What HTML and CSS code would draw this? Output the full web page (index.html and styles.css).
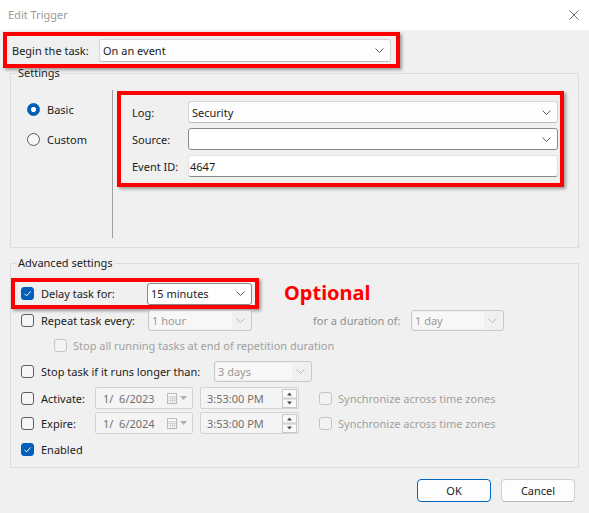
FILE: index.html
```html
<!DOCTYPE html>
<html>
<head>
<meta charset="utf-8">
<title>Edit Trigger</title>
<link rel="stylesheet" href="styles.css">
</head>
<body>
<div class="window">
  <div class="titlebar">
    <span class="title">Edit Trigger</span>
    <svg class="close" width="10" height="10" viewBox="0 0 10 10"><path d="M0.5 0.5L9.5 9.5M9.5 0.5L0.5 9.5" stroke="#707070" stroke-width="1" fill="none"/></svg>
  </div>

  <div class="mark begin-row">
    <span class="begin-label">Begin the task:</span>
    <div class="select begin-select">
      <span class="val">On an event</span>
      <svg class="chev" width="9" height="5" viewBox="0 0 9 5"><path d="M0.5 0.5L4.5 4.5L8.5 0.5" fill="none" stroke="#5f5f5f"/></svg>
    </div>
  </div>

  <fieldset class="group settings">
    <legend>Settings</legend>
    <div class="settings-inner">
      <div class="radios">
        <div class="radio-row"><span class="radio on"></span><span>Basic</span></div>
        <div class="radio-row"><span class="radio"></span><span>Custom</span></div>
      </div>
      <div class="vsep"></div>
      <div class="mark event-box">
        <div class="field-row">
          <span class="field-label">Log:</span>
          <div class="select field">
            <span class="val">Security</span>
            <svg class="chev" width="9" height="5" viewBox="0 0 9 5"><path d="M0.5 0.5L4.5 4.5L8.5 0.5" fill="none" stroke="#5f5f5f"/></svg>
          </div>
        </div>
        <div class="field-row">
          <span class="field-label">Source:</span>
          <div class="select field dark">
            <span class="val"></span>
            <svg class="chev" width="9" height="5" viewBox="0 0 9 5"><path d="M0.5 0.5L4.5 4.5L8.5 0.5" fill="none" stroke="#5f5f5f"/></svg>
          </div>
        </div>
        <div class="field-row">
          <span class="field-label">Event ID:</span>
          <div class="input field"><span class="val">4647</span></div>
        </div>
      </div>
    </div>
  </fieldset>

  <fieldset class="group advanced">
    <legend>Advanced settings</legend>
    <div class="adv-top">
      <div class="mark delay-box">
        <span class="cb on"><svg width="11" height="11" viewBox="0 0 11 11"><path d="M2.5 5.8L4.6 7.9L8.6 3.4" fill="none" stroke="#fff" stroke-width="1"/></svg></span>
        <span class="lbl w-delay">Delay task for:</span>
        <div class="select dark delay-select">
          <span class="val">15 minutes</span>
          <svg class="chev" width="9" height="5" viewBox="0 0 9 5"><path d="M0.5 0.5L4.5 4.5L8.5 0.5" fill="none" stroke="#5f5f5f"/></svg>
        </div>
      </div>
      <span class="optional">Optional</span>
    </div>

    <div class="row r-repeat">
      <span class="cb"></span>
      <span class="lbl w-repeat">Repeat task every:</span>
      <div class="dsel s-hour">
        <span class="dval">1 hour</span>
        <svg class="dchev" width="9" height="5" viewBox="0 0 9 5"><path d="M0.5 0.5L4.5 4.5L8.5 0.5" fill="none" stroke="#b8b8b8"/></svg>
      </div>
      <span class="dis-text duration-label">for a duration of:</span>
      <div class="dsel s-day">
        <span class="dval">1 day</span>
        <svg class="dchev" width="9" height="5" viewBox="0 0 9 5"><path d="M0.5 0.5L4.5 4.5L8.5 0.5" fill="none" stroke="#b8b8b8"/></svg>
      </div>
    </div>

    <div class="row r-stopall">
      <span class="cb dis"></span>
      <span class="dis-text lbl-dis">Stop all running tasks at end of repetition duration</span>
    </div>

    <div class="row r-stoptask">
      <span class="cb"></span>
      <span class="lbl w-stop">Stop task if it runs longer than:</span>
      <div class="dsel s-days">
        <span class="dval">3 days</span>
        <svg class="dchev" width="9" height="5" viewBox="0 0 9 5"><path d="M0.5 0.5L4.5 4.5L8.5 0.5" fill="none" stroke="#b8b8b8"/></svg>
      </div>
    </div>

    <div class="row r-activate">
      <span class="cb"></span>
      <span class="lbl w-date">Activate:</span>
      <div class="dt date">
        <span class="dt-val">1/&nbsp;&nbsp;6/2023</span>
        <svg class="cal" width="11" height="12" viewBox="0 0 11 12"><rect x="1.5" y="1.5" width="9" height="10" fill="#e6e6e6"/><rect x="0.5" y="0.5" width="9" height="10" fill="#f8f8f8" stroke="#bcbcbc"/><path d="M1 3.5H9M1 5.5H9M1 7.5H9M3.5 3V10M5.5 3V10M7.5 3V10" stroke="#d6d6d6" stroke-width="1"/></svg>
        <svg class="tri" width="7" height="4" viewBox="0 0 7 4"><path d="M0 0H7L3.5 4Z" fill="#b0b0b0"/></svg>
      </div>
      <div class="dt time">
        <span class="dt-val">3:53:00 PM</span>
        <svg class="spin" width="15" height="19" viewBox="0 0 15 19"><rect x="0.5" y="0.5" width="14" height="8.5" fill="#fafafa" stroke="#c8c8c8"/><rect x="0.5" y="10" width="14" height="8.5" fill="#fafafa" stroke="#c8c8c8"/><path d="M5 6.5H10L7.5 3.5Z" fill="#4a4a4a"/><path d="M5 12.5H10L7.5 15.5Z" fill="#4a4a4a"/></svg>
      </div>
      <span class="cb dis sync-cb"></span>
      <span class="dis-text lbl-dis">Synchronize across time zones</span>
    </div>

    <div class="row r-expire">
      <span class="cb"></span>
      <span class="lbl w-date">Expire:</span>
      <div class="dt date">
        <span class="dt-val">1/&nbsp;&nbsp;6/2024</span>
        <svg class="cal" width="11" height="12" viewBox="0 0 11 12"><rect x="1.5" y="1.5" width="9" height="10" fill="#e6e6e6"/><rect x="0.5" y="0.5" width="9" height="10" fill="#f8f8f8" stroke="#bcbcbc"/><path d="M1 3.5H9M1 5.5H9M1 7.5H9M3.5 3V10M5.5 3V10M7.5 3V10" stroke="#d6d6d6" stroke-width="1"/></svg>
        <svg class="tri" width="7" height="4" viewBox="0 0 7 4"><path d="M0 0H7L3.5 4Z" fill="#b0b0b0"/></svg>
      </div>
      <div class="dt time">
        <span class="dt-val">3:53:00 PM</span>
        <svg class="spin" width="15" height="19" viewBox="0 0 15 19"><rect x="0.5" y="0.5" width="14" height="8.5" fill="#fafafa" stroke="#c8c8c8"/><rect x="0.5" y="10" width="14" height="8.5" fill="#fafafa" stroke="#c8c8c8"/><path d="M5 6.5H10L7.5 3.5Z" fill="#4a4a4a"/><path d="M5 12.5H10L7.5 15.5Z" fill="#4a4a4a"/></svg>
      </div>
      <span class="cb dis sync-cb"></span>
      <span class="dis-text lbl-dis">Synchronize across time zones</span>
    </div>

    <div class="row r-enabled">
      <span class="cb on"><svg width="11" height="11" viewBox="0 0 11 11"><path d="M2.5 5.8L4.6 7.9L8.6 3.4" fill="none" stroke="#fff" stroke-width="1"/></svg></span>
      <span class="lbl">Enabled</span>
    </div>
  </fieldset>

  <div class="buttons">
    <button class="btn primary">OK</button>
    <button class="btn">Cancel</button>
  </div>
</div>
</body>
</html>
```

FILE: styles.css
```css
* { box-sizing: border-box; }
html, body { margin: 0; padding: 0; }
body {
  background: #f0f0f0;
  font-family: "Noto Sans", "Open Sans", sans-serif;
  font-size: 11px;
  color: #1b1b1b;
}
.window {
  width: 589px;
  height: 513px;
  background: #f0f0f0;
  overflow: hidden;
}
.titlebar {
  height: 30px;
  background: #ffffff;
  display: flex;
  align-items: center;
  justify-content: space-between;
  padding: 0 10px 0 8px;
}
.title { color: #9b9b9b; margin-top: -1px; }
.close { display: block; margin-top: -1px; }

.mark {
  border: 4px solid #ff0000;
  box-shadow: 2px 2px 3px rgba(0, 0, 0, 0.35);
}

.begin-row {
  margin: 2px 0 0 3px;
  width: 397px;
  height: 36px;
  display: flex;
  align-items: center;
  justify-content: space-between;
  padding: 0 5px;
}
.select {
  display: flex;
  align-items: center;
  height: 22px;
  border: 1px solid #d6d6d6;
  border-bottom-color: #bdbdbd;
  background: #fdfdfd;
  border-radius: 3px;
  padding: 0 6px 0 3px;
}
.select .val { flex: 1; white-space: nowrap; }
.select.dark { border-color: #8a8a8a; background: #ffffff; }
.chev { display: block; flex: none; }
.begin-select { width: 292px; height: 23px; }

.group {
  margin: 0 10px;
  padding: 0;
  border: 1px solid #dcdcdc;
  min-width: 0;
}
.group legend {
  margin-left: 6px;
  padding: 0 1px;
  line-height: 10px;
  color: #1b1b1b;
}
.settings { margin-top: 0; }
.settings-inner {
  display: flex;
  align-items: flex-start;
  height: 169px;
  padding: 12px 0 9px;
}
.radios {
  width: 101px;
  padding: 4px 0 0 16px;
}
.radio-row {
  display: flex;
  align-items: center;
  height: 30px;
}
.radio {
  width: 13px;
  height: 13px;
  border-radius: 50%;
  border: 1px solid #5a5a5a;
  background: #f7f7f7;
  margin-right: 7px;
  flex: none;
}
.radio.on {
  border-color: #005fb8;
  background: radial-gradient(circle, #ffffff 0 2.3px, #005fb8 2.9px);
}
.vsep {
  width: 1px;
  align-self: stretch;
  background: #a0a0a0;
}
.event-box {
  margin: 1px 0 0 4px;
  width: 447px;
  height: 96px;
  padding: 6px 2px 6px 11px;
  display: flex;
  flex-direction: column;
  gap: 5px;
}
.field-row {
  display: flex;
  align-items: center;
  height: 22px;
}
.field-label { width: 56px; flex: none; }
.field { width: 370px; }
.input {
  display: flex;
  align-items: center;
  height: 22px;
  background: #ffffff;
  border: 1px solid #e2e2e2;
  border-bottom-color: #8a8a8a;
  border-radius: 3px;
  padding: 0 1px;
}

.advanced { margin-top: 10px; padding-bottom: 7px; }
.adv-top {
  display: flex;
  align-items: center;
  margin-top: 10px;
}
.delay-box {
  width: 248px;
  height: 31px;
  display: flex;
  align-items: center;
  padding: 0 3px 0 6px;
}
.delay-select { width: 105px; }
.optional {
  margin-left: 25px;
  color: #ff0000;
  font-weight: bold;
  font-size: 20px;
  line-height: 1;
  margin-top: -2px;
}

.row {
  display: flex;
  align-items: center;
  height: 22px;
  padding-left: 10px;
  white-space: nowrap;
}
.r-stopall { margin-top: 3px; padding-left: 43px; }
.r-stoptask { margin-top: 4px; }
.r-activate { margin-top: 5px; }
.r-expire { margin-top: 3px; }
.r-enabled { margin-top: 4px; }

.cb {
  width: 13px;
  height: 13px;
  border: 1px solid #5d5d5d;
  border-radius: 3px;
  background: #f6f6f6;
  flex: none;
  display: flex;
  align-items: center;
  justify-content: center;
}
.cb svg { display: block; }
.cb.on { background: #005fb8; border-color: #005fb8; }
.cb.dis { border-color: #c4c4c4; background: #f3f3f3; }
.lbl { margin-left: 7px; flex: none; }
.w-delay { width: 106px; }
.w-repeat { width: 107px; }
.w-stop { width: 173px; }
.w-date { width: 54px; }
.lbl-dis { margin-left: 6px; }
.dis-text { color: #a0a0a0; }
.duration-label { margin-left: 61px; width: 98px; flex: none; color: #8f8f8f; }

.dsel {
  display: flex;
  align-items: stretch;
  height: 21px;
  border: 1px solid #c9c9c9;
  border-radius: 3px;
  background: #f0f0f0;
  padding: 1px;
  flex: none;
}
.dval {
  flex: 1;
  background: #f7f7f7;
  color: #999999;
  display: flex;
  align-items: center;
  padding-left: 2px;
}
.dchev { align-self: center; margin: 0 5px 0 4px; display: block; }
.s-hour { width: 104px; }
.s-day { width: 93px; }
.s-days { width: 98px; }

.dt {
  display: flex;
  align-items: center;
  height: 22px;
  border: 1px solid #d3d3d3;
  border-radius: 2px;
  background: #f4f4f4;
  flex: none;
}
.dt-val { flex: 1; color: #707070; }
.date { width: 98px; padding: 0 5px 0 7px; }
.cal { display: block; margin-top: 1px; }
.tri { display: block; margin-left: 2px; }
.time { width: 99px; margin-left: 7px; padding: 0 1px 0 6px; }
.spin { display: block; }
.sync-cb { margin-left: 20px; }

.buttons {
  display: flex;
  justify-content: flex-end;
  gap: 10px;
  margin-top: 11px;
  padding-right: 14px;
}
.btn {
  width: 74px;
  height: 23px;
  padding: 0;
  font: inherit;
  color: #1b1b1b;
  background: #fdfdfd;
  border: 1px solid #d0d0d0;
  border-bottom-color: #bcbcbc;
  border-radius: 4px;
}
.btn.primary { border-color: #0067c0; }
```
